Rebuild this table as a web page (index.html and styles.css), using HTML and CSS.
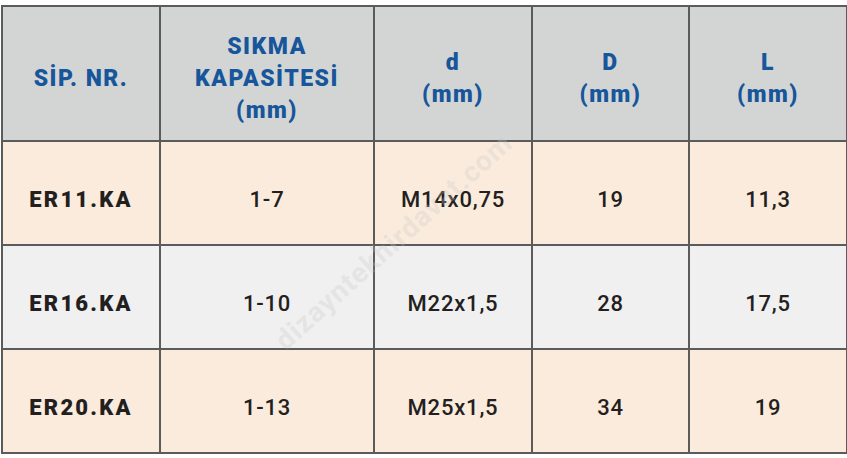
FILE: index.html
```html
<!DOCTYPE html>
<html>
<head>
  <link rel="stylesheet" href="styles.css">
</head>
<body>
  <div class="wrap">
    <table class="spec-table">
      <colgroup>
        <col class="c1">
        <col class="c2">
        <col class="c3">
        <col class="c4">
        <col class="c5">
      </colgroup>
      <thead>
        <tr>
          <th>SİP. NR.</th>
          <th>SIKMA<br>KAPASİTESİ<br>(mm)</th>
          <th>d<br>(mm)</th>
          <th>D<br>(mm)</th>
          <th>L<br>(mm)</th>
        </tr>
      </thead>
      <tbody>
        <tr class="odd">
          <td class="code">ER11.KA</td>
          <td>1-7</td>
          <td>M14x0,75</td>
          <td>19</td>
          <td>11,3</td>
        </tr>
        <tr class="even">
          <td class="code">ER16.KA</td>
          <td>1-10</td>
          <td>M22x1,5</td>
          <td>28</td>
          <td>17,5</td>
        </tr>
        <tr class="odd">
          <td class="code">ER20.KA</td>
          <td>1-13</td>
          <td>M25x1,5</td>
          <td>34</td>
          <td>19</td>
        </tr>
      </tbody>
    </table>
    <div class="watermark">dizayntekhirdavat.com</div>
  </div>
</body>
</html>
```

FILE: styles.css
```css
body {
  margin: 0;
  background-color: #fff;
  font-family: Roboto, "Liberation Sans", sans-serif;
}

.wrap {
  position: relative;
  padding: 5px 0 0 1px;
  width: 845px;
}

.spec-table {
  width: 845px;
  border-collapse: collapse;
  table-layout: fixed;
  border: 2px solid #5b5b5b;
}

.c1 { width: 158px; }
.c2 { width: 214px; }
.c3 { width: 158px; }
.c4 { width: 157px; }
.c5 { width: 158px; }

th,
td {
  border: 2px solid #5b5b5b;
  text-align: center;
  vertical-align: middle;
  padding: 0;
}

th {
  height: 123px;
  padding-top: 10px;
  background-color: #d3d5d5;
  color: #17569b;
  font-size: 23px;
  font-weight: 900;
  line-height: 32px;
  letter-spacing: 1.5px;
}

td {
  height: 90px;
  padding-top: 12px;
  color: #231f20;
  font-size: 22px;
  font-weight: 500;
  letter-spacing: 0.8px;
}

td.code {
  font-weight: 900;
  letter-spacing: 2.2px;
}

.odd td {
  background-color: #fbebdc;
}

.even td {
  background-color: #f0f0f0;
}

.watermark {
  position: absolute;
  left: 240px;
  top: 225px;
  transform: rotate(-42deg);
  font-size: 28px;
  font-weight: bold;
  letter-spacing: 1px;
  color: rgba(200, 200, 200, 0.3);
  pointer-events: none;
}
```
